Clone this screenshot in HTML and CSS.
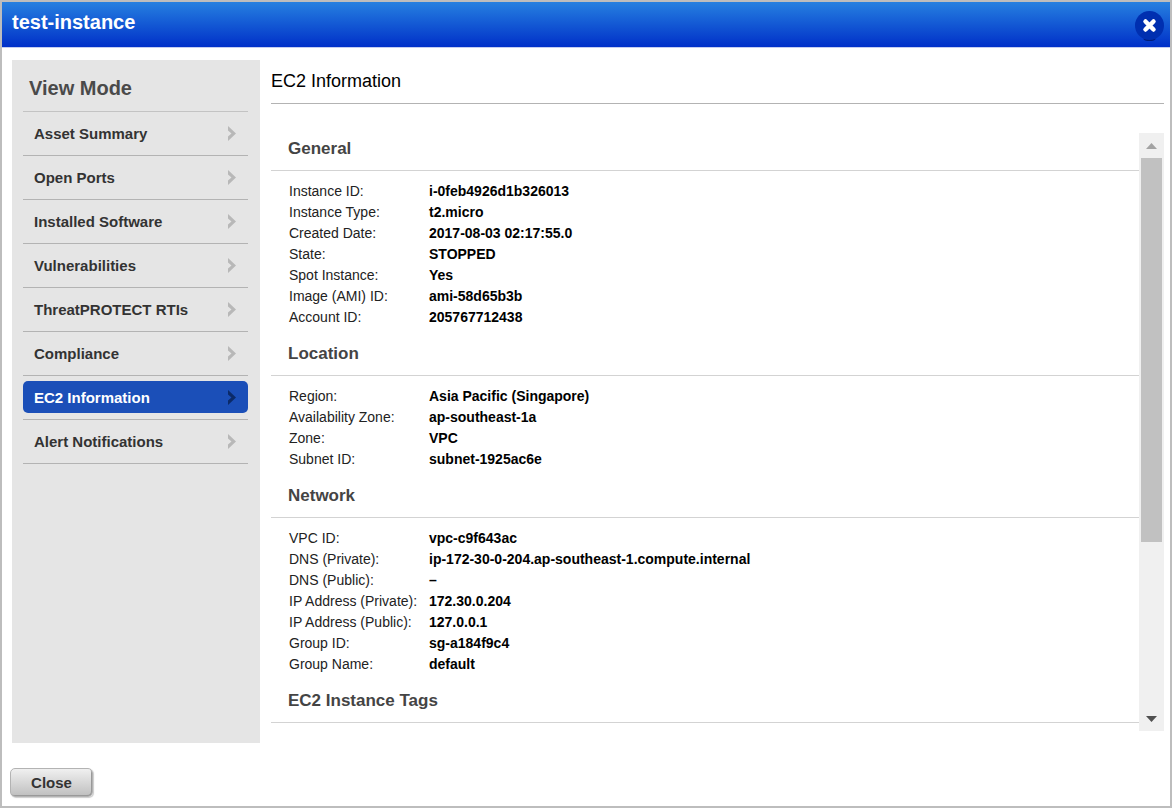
FILE: index.html
```html
<!DOCTYPE html>
<html lang="en">
<head>
  <meta charset="UTF-8">
  <meta name="viewport" content="width=device-width, initial-scale=1.0">
  <title>test-instance</title>
  <link rel="stylesheet" href="styles.css">
</head>
<body>

  <header class="titlebar">
    <h1>test-instance</h1>
    <button class="close-icon" aria-label="Close window">
      <svg width="29" height="31" viewBox="0 0 29 31">
        <ellipse cx="14.5" cy="28" rx="6" ry="2" fill="#001c78"/>
        <circle cx="14.5" cy="14.5" r="14.5" fill="#002fb0"/>
        <path d="M10.500 10.500 L18.500 18.500 M18.500 10.500 L10.500 18.500" stroke="#fff" stroke-width="4.500" stroke-linecap="round"/>
      </svg>
    </button>
  </header>

  <div class="main">
    <nav class="sidebar">
      <h2>View Mode</h2>
      <ul>
        <li><a href="#summary">Asset Summary <svg class="arrow" viewBox="0 0 8 16"><path d="M0 1 L8 8.500 L0 16 V11.500 L3.500 8.500 L0 5.500 Z"/></svg></a></li>
        <li><a href="#ports">Open Ports <svg class="arrow" viewBox="0 0 8 16"><path d="M0 1 L8 8.500 L0 16 V11.500 L3.500 8.500 L0 5.500 Z"/></svg></a></li>
        <li><a href="#software">Installed Software <svg class="arrow" viewBox="0 0 8 16"><path d="M0 1 L8 8.500 L0 16 V11.500 L3.500 8.500 L0 5.500 Z"/></svg></a></li>
        <li><a href="#vulnerabilities">Vulnerabilities <svg class="arrow" viewBox="0 0 8 16"><path d="M0 1 L8 8.500 L0 16 V11.500 L3.500 8.500 L0 5.500 Z"/></svg></a></li>
        <li><a href="#rtis">ThreatPROTECT RTIs <svg class="arrow" viewBox="0 0 8 16"><path d="M0 1 L8 8.500 L0 16 V11.500 L3.500 8.500 L0 5.500 Z"/></svg></a></li>
        <li><a href="#compliance">Compliance <svg class="arrow" viewBox="0 0 8 16"><path d="M0 1 L8 8.500 L0 16 V11.500 L3.500 8.500 L0 5.500 Z"/></svg></a></li>
        <li><a href="#ec2" class="active">EC2 Information <svg class="arrow" viewBox="0 0 8 16"><path d="M0 1 L8 8.500 L0 16 V11.500 L3.500 8.500 L0 5.500 Z"/></svg></a></li>
        <li><a href="#alerts">Alert Notifications <svg class="arrow" viewBox="0 0 8 16"><path d="M0 1 L8 8.500 L0 16 V11.500 L3.500 8.500 L0 5.500 Z"/></svg></a></li>
      </ul>
    </nav>

    <main class="content" id="ec2">
      <h2>EC2 Information</h2>

      <div class="panel">
        <div class="details">
          <section>
            <h3>General</h3>
            <dl>
              <dt>Instance ID:</dt><dd>i-0feb4926d1b326013</dd>
              <dt>Instance Type:</dt><dd>t2.micro</dd>
              <dt>Created Date:</dt><dd>2017-08-03 02:17:55.0</dd>
              <dt>State:</dt><dd>STOPPED</dd>
              <dt>Spot Instance:</dt><dd>Yes</dd>
              <dt>Image (AMI) ID:</dt><dd>ami-58d65b3b</dd>
              <dt>Account ID:</dt><dd>205767712438</dd>
            </dl>
          </section>

          <section>
            <h3>Location</h3>
            <dl>
              <dt>Region:</dt><dd>Asia Pacific (Singapore)</dd>
              <dt>Availability Zone:</dt><dd>ap-southeast-1a</dd>
              <dt>Zone:</dt><dd>VPC</dd>
              <dt>Subnet ID:</dt><dd>subnet-1925ac6e</dd>
            </dl>
          </section>

          <section>
            <h3>Network</h3>
            <dl>
              <dt>VPC ID:</dt><dd>vpc-c9f643ac</dd>
              <dt>DNS (Private):</dt><dd>ip-172-30-0-204.ap-southeast-1.compute.internal</dd>
              <dt>DNS (Public):</dt><dd>–</dd>
              <dt>IP Address (Private):</dt><dd>172.30.0.204</dd>
              <dt>IP Address (Public):</dt><dd>127.0.0.1</dd>
              <dt>Group ID:</dt><dd>sg-a184f9c4</dd>
              <dt>Group Name:</dt><dd>default</dd>
            </dl>
          </section>

          <section>
            <h3>EC2 Instance Tags</h3>
          </section>
        </div>

        <div class="scrollbar">
          <button class="scroll-btn" aria-label="Scroll up">
            <svg width="11" height="6" viewBox="0 0 11 6"><path d="M0 6 L5.500 0 L11 6 Z" fill="#a3a3a3"/></svg>
          </button>
          <div class="track"><div class="thumb"></div></div>
          <button class="scroll-btn" aria-label="Scroll down">
            <svg width="11" height="6" viewBox="0 0 11 6"><path d="M0 0 L5.500 6 L11 0 Z" fill="#505050"/></svg>
          </button>
        </div>
      </div>
    </main>
  </div>

  <footer>
    <button class="close-btn">Close</button>
  </footer>

</body>
</html>
```

FILE: styles.css
```css
* {
  margin: 0;
  padding: 0;
  box-sizing: border-box;
}

body {
  display: flex;
  flex-direction: column;
  min-height: 100vh;
  border: 2px solid #bdbdbd;
  background-color: #fff;
  font-family: "Liberation Sans", Arial, sans-serif;
  color: #000;
}

button {
  border: none;
  background: none;
  font-family: inherit;
  cursor: pointer;
}

/* Title bar */
.titlebar {
  display: flex;
  justify-content: space-between;
  height: 46px;
  padding: 0 6px 0 10px;
  border-bottom: 1px solid #c3cdf0;
  background: linear-gradient(#2680e0, #0030c8);
}

.titlebar h1 {
  font-size: 20px;
  line-height: 40px;
  color: #fff;
}

.close-icon {
  height: 31px;
  margin-top: 9px;
}

.close-icon svg {
  display: block;
}

.main {
  display: flex;
  flex: 1;
  gap: 11px;
  padding: 12px 6px 0 10px;
}

/* View mode menu */
.sidebar {
  width: 248px;
  flex-shrink: 0;
  padding: 0 12px 0 11px;
  background-color: #e5e5e5;
}

.sidebar h2 {
  height: 52px;
  padding: 0 6px;
  border-bottom: 1px solid #c3c3c3;
  font-size: 20px;
  line-height: 56px;
  color: #4a4a4a;
}

.sidebar ul {
  list-style: none;
}

.sidebar li {
  padding: 5px 0 6px;
  border-bottom: 1px solid #b3b3b3;
}

.sidebar a {
  display: flex;
  justify-content: space-between;
  align-items: center;
  height: 32px;
  padding: 0 12px 0 11px;
  border-radius: 5px;
  font-size: 15px;
  font-weight: bold;
  color: #333;
  text-decoration: none;
}

.sidebar a.active {
  background-color: #1b4fb8;
  color: #fff;
}

.arrow {
  width: 8px;
  height: 16px;
  fill: #b8b8b8;
}

.active .arrow {
  fill: #0b2a68;
}

/* Details */
.content {
  display: flex;
  flex-direction: column;
  flex: 1;
  padding-bottom: 12px;
}

.content h2 {
  height: 44px;
  margin-bottom: 29px;
  border-bottom: 1px solid #b3b3b3;
  font-size: 18px;
  font-weight: normal;
  line-height: 42px;
}

.panel {
  display: flex;
  flex: 1;
}

.details {
  flex: 1;
}

.details h3 {
  padding: 0 17px 5px;
  border-bottom: 1px solid #d3d3d3;
  font-size: 17px;
  line-height: 32px;
  color: #444;
}

.details dl {
  display: grid;
  grid-template-columns: 140px 1fr;
  padding: 10px 18px;
  line-height: 21px;
}

.details dt {
  font-size: 14px;
  color: #222;
}

.details dd {
  font-size: 14px;
  font-weight: bold;
}

.scrollbar {
  display: flex;
  flex-direction: column;
  width: 25px;
  background-color: #f0f0f0;
}

.scroll-btn {
  display: flex;
  align-items: center;
  justify-content: center;
  height: 25px;
}

.track {
  display: flex;
  flex-direction: column;
  flex: 1;
  padding: 0 2px;
}

.thumb {
  flex: 0 0 70%;
  background-color: #c1c1c1;
}

/* Footer */
footer {
  padding: 25px 8px 9px;
}

.close-btn {
  width: 83px;
  height: 29px;
  border: 1px solid #b3b3b3;
  border-radius: 5px;
  background: linear-gradient(#f0f0f0, #bfbfbf);
  box-shadow: inset -1px -1px 0 #999, 1px 1px 1px #ccc;
  font-size: 15px;
  font-weight: bold;
  color: #333;
}
```
